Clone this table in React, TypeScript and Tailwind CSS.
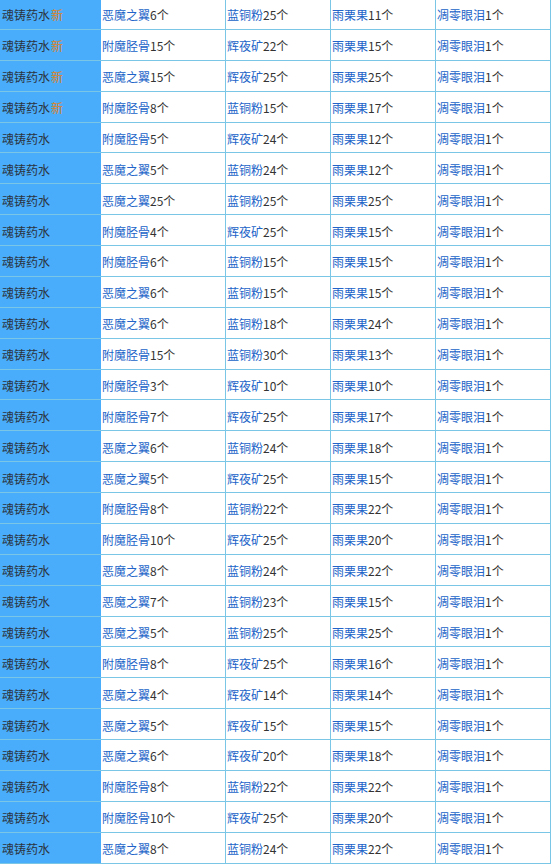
import React from 'react';

type Row = { isNew?: boolean; a: [string, number]; b: [string, number]; c: [string, number] };

const rows: Row[] = [
  { isNew: true, a: ['恶魔之翼', 6], b: ['蓝铜粉', 25], c: ['雨栗果', 11] },
  { isNew: true, a: ['附魔胫骨', 15], b: ['辉夜矿', 22], c: ['雨栗果', 15] },
  { isNew: true, a: ['恶魔之翼', 15], b: ['辉夜矿', 25], c: ['雨栗果', 25] },
  { isNew: true, a: ['附魔胫骨', 8], b: ['蓝铜粉', 15], c: ['雨栗果', 17] },
  { a: ['附魔胫骨', 5], b: ['辉夜矿', 24], c: ['雨栗果', 12] },
  { a: ['恶魔之翼', 5], b: ['蓝铜粉', 24], c: ['雨栗果', 12] },
  { a: ['恶魔之翼', 25], b: ['蓝铜粉', 25], c: ['雨栗果', 25] },
  { a: ['附魔胫骨', 4], b: ['辉夜矿', 25], c: ['雨栗果', 15] },
  { a: ['附魔胫骨', 6], b: ['蓝铜粉', 15], c: ['雨栗果', 15] },
  { a: ['恶魔之翼', 6], b: ['蓝铜粉', 15], c: ['雨栗果', 15] },
  { a: ['恶魔之翼', 6], b: ['蓝铜粉', 18], c: ['雨栗果', 24] },
  { a: ['附魔胫骨', 15], b: ['蓝铜粉', 30], c: ['雨栗果', 13] },
  { a: ['附魔胫骨', 3], b: ['辉夜矿', 10], c: ['雨栗果', 10] },
  { a: ['附魔胫骨', 7], b: ['辉夜矿', 25], c: ['雨栗果', 17] },
  { a: ['恶魔之翼', 6], b: ['蓝铜粉', 24], c: ['雨栗果', 18] },
  { a: ['恶魔之翼', 5], b: ['辉夜矿', 25], c: ['雨栗果', 15] },
  { a: ['附魔胫骨', 8], b: ['蓝铜粉', 22], c: ['雨栗果', 22] },
  { a: ['附魔胫骨', 10], b: ['辉夜矿', 25], c: ['雨栗果', 20] },
  { a: ['恶魔之翼', 8], b: ['蓝铜粉', 24], c: ['雨栗果', 22] },
  { a: ['恶魔之翼', 7], b: ['蓝铜粉', 23], c: ['雨栗果', 15] },
  { a: ['恶魔之翼', 5], b: ['蓝铜粉', 25], c: ['雨栗果', 25] },
  { a: ['附魔胫骨', 8], b: ['辉夜矿', 25], c: ['雨栗果', 16] },
  { a: ['恶魔之翼', 4], b: ['辉夜矿', 14], c: ['雨栗果', 14] },
  { a: ['恶魔之翼', 5], b: ['辉夜矿', 15], c: ['雨栗果', 15] },
  { a: ['恶魔之翼', 6], b: ['辉夜矿', 20], c: ['雨栗果', 18] },
  { a: ['附魔胫骨', 8], b: ['蓝铜粉', 22], c: ['雨栗果', 22] },
  { a: ['附魔胫骨', 10], b: ['辉夜矿', 25], c: ['雨栗果', 20] },
  { a: ['恶魔之翼', 8], b: ['蓝铜粉', 24], c: ['雨栗果', 22] },
];

const Item: React.FC<{ name: string; count: number }> = ({ name, count }) => (
  <span className="whitespace-nowrap">
    <a className="text-[#2163c8]">{name}</a>
    <span className="text-[#333]">{count}个</span>
  </span>
);

const cell = "flex items-center pl-[1px] pt-[3px] border-r border-[#79c6e6] overflow-hidden";

export default function App() {
  return (
    <div
      className="w-[551px] h-[867px] overflow-hidden bg-white text-[12px] leading-none"
      style={{ fontFamily: '"Microsoft YaHei", "Noto Sans CJK SC", sans-serif' }}
    >
      <div className="mt-[-1px]">
        {rows.map((r, i) => (
          <div
            key={i}
            className="grid grid-cols-[101px_125px_105px_105px_115px] h-[30.88px] border-b border-[#79c6e6]"
          >
            <div className="flex items-center pl-[2px] pt-[3px] bg-[#4aadfb] text-[#2b3440] whitespace-nowrap">
              魂铸药水
              {r.isNew && <span className="text-[#dc8226] ml-[1px]">新</span>}
            </div>
            <div className={cell}><Item name={r.a[0]} count={r.a[1]} /></div>
            <div className={cell}><Item name={r.b[0]} count={r.b[1]} /></div>
            <div className={cell}><Item name={r.c[0]} count={r.c[1]} /></div>
            <div className={cell}><Item name="凋零眼泪" count={1} /></div>
          </div>
        ))}
      </div>
    </div>
  );
}
